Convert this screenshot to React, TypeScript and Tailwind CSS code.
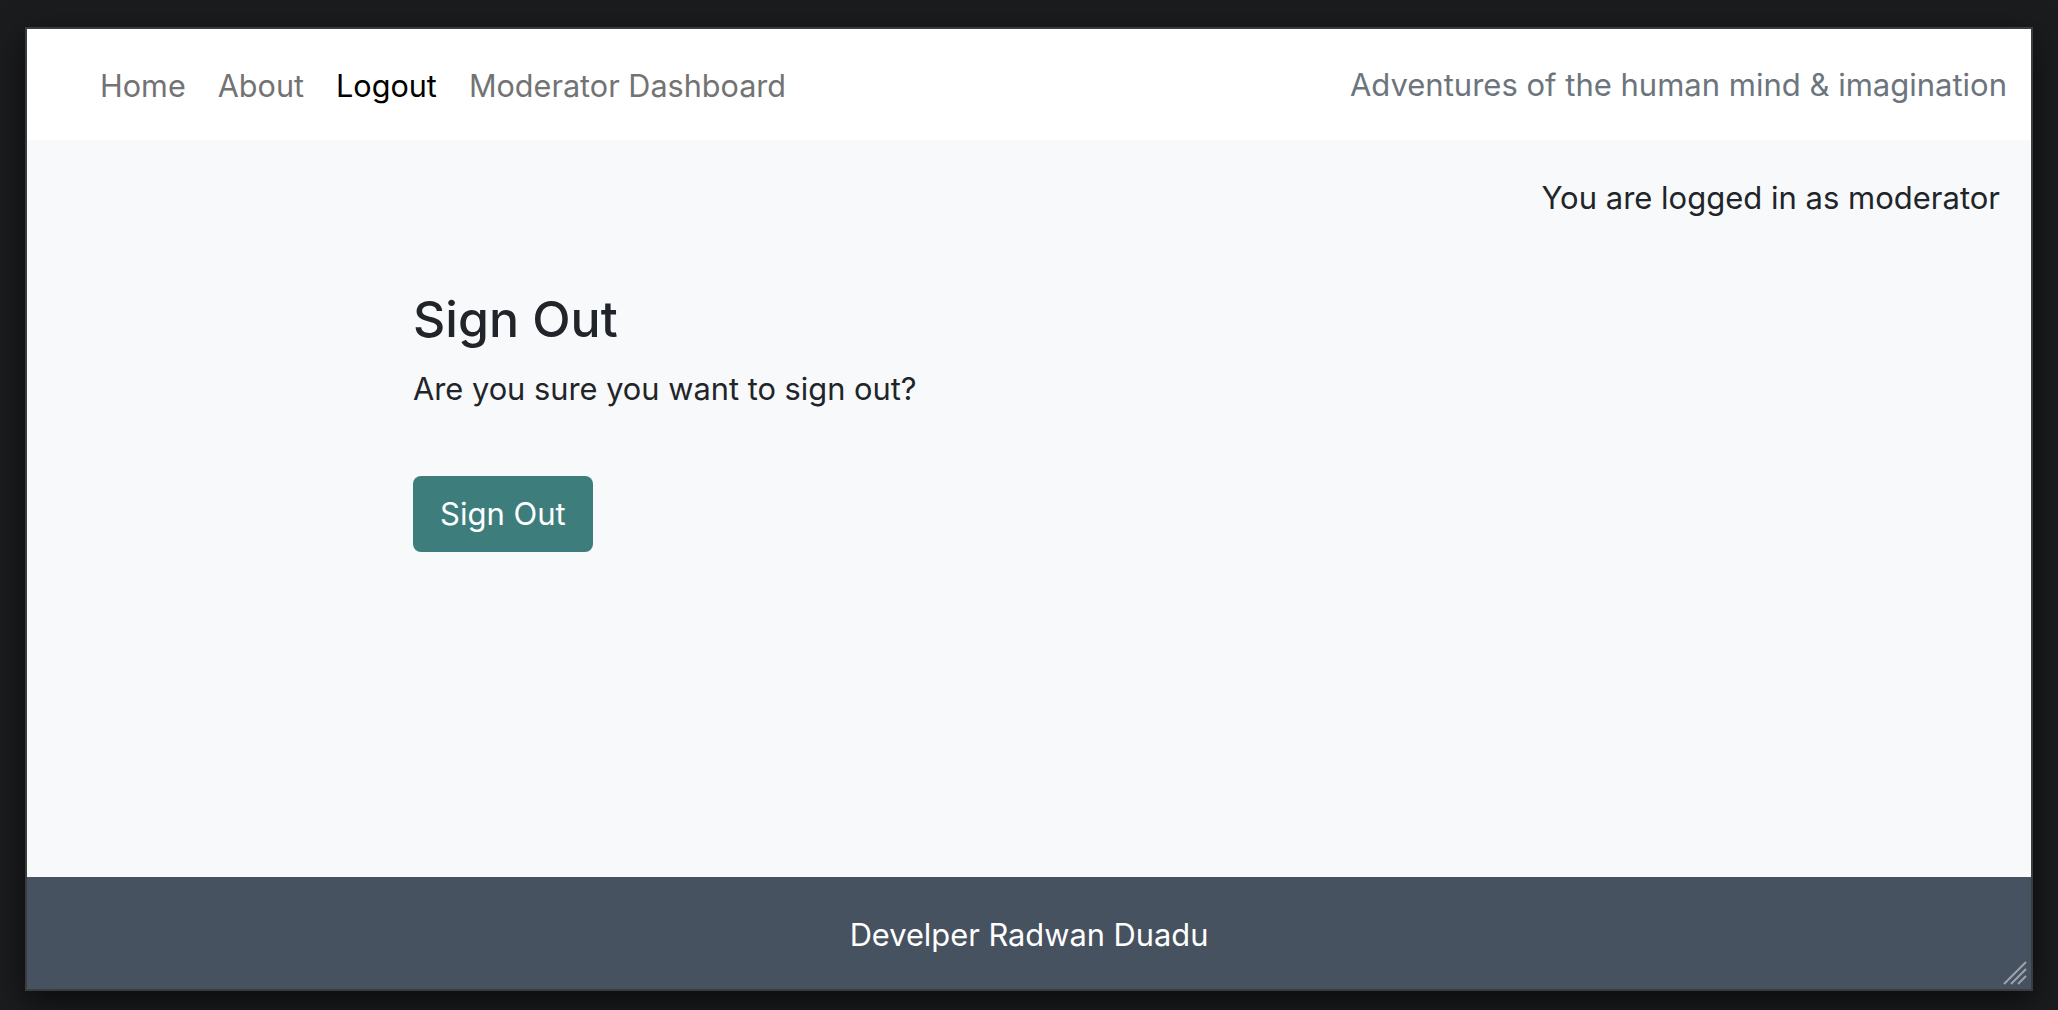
import React from 'react';

const navLinks = [
  { label: 'Home', active: false },
  { label: 'About', active: false },
  { label: 'Logout', active: true },
  { label: 'Moderator Dashboard', active: false },
];

const ResizeGrip: React.FC = () => (
  <svg className="absolute bottom-[3px] right-[3px] w-[26px] h-[26px]" viewBox="0 0 26 26">
    <path d="M2 24 L24 2 M9 24 L24 9 M16 24 L24 16" stroke="#9ca3af" strokeWidth={2} />
  </svg>
);

export default function App() {
  return (
    <div
      className="w-full h-screen bg-[#1b1c1e] pt-[27px] pl-[25px] pr-[25px] pb-[19px]"
      style={{ fontFamily: 'Inter, "Noto Sans", sans-serif' }}
    >
      <div className="relative h-full border-2 border-[#3b3c3e] flex flex-col shadow-[0_10px_30px_rgba(0,0,0,0.6)]">
        {/* navbar */}
        <nav className="h-[111px] bg-white flex items-center justify-between pl-[73px] pr-[24px] pt-[2px] shrink-0">
          <ul className="flex items-center gap-[32px] text-[30.6px]">
            {navLinks.map((link) => (
              <li key={link.label}>
                <a className={link.active ? 'text-black' : 'text-[#737373]'}>{link.label}</a>
              </li>
            ))}
          </ul>
          <span className="text-[31px] text-[#6c757d]">Adventures of the human mind &amp; imagination</span>
        </nav>

        {/* main */}
        <main className="flex-1 bg-[#f8f9fa] text-[#212529]">
          <div className="flex justify-end pr-[31px] pt-[35px] text-[31px]">You are logged in as moderator</div>
          <section className="pl-[386px] pt-[66px]">
            <h2 className="text-[50px] font-medium leading-tight">Sign Out</h2>
            <p className="text-[30.8px] mt-[16px]">Are you sure you want to sign out?</p>
            <button className="mt-[64px] h-[76px] px-[27px] bg-[#3d7e7d] text-white text-[31px] rounded-[8px]">
              Sign Out
            </button>
          </section>
        </main>

        {/* footer */}
        <footer className="h-[112px] bg-[#475260] flex items-center justify-center pt-[4px] text-white text-[30.8px] shrink-0">
          Develper Radwan Duadu
        </footer>
        <ResizeGrip />
      </div>
    </div>
  );
}
